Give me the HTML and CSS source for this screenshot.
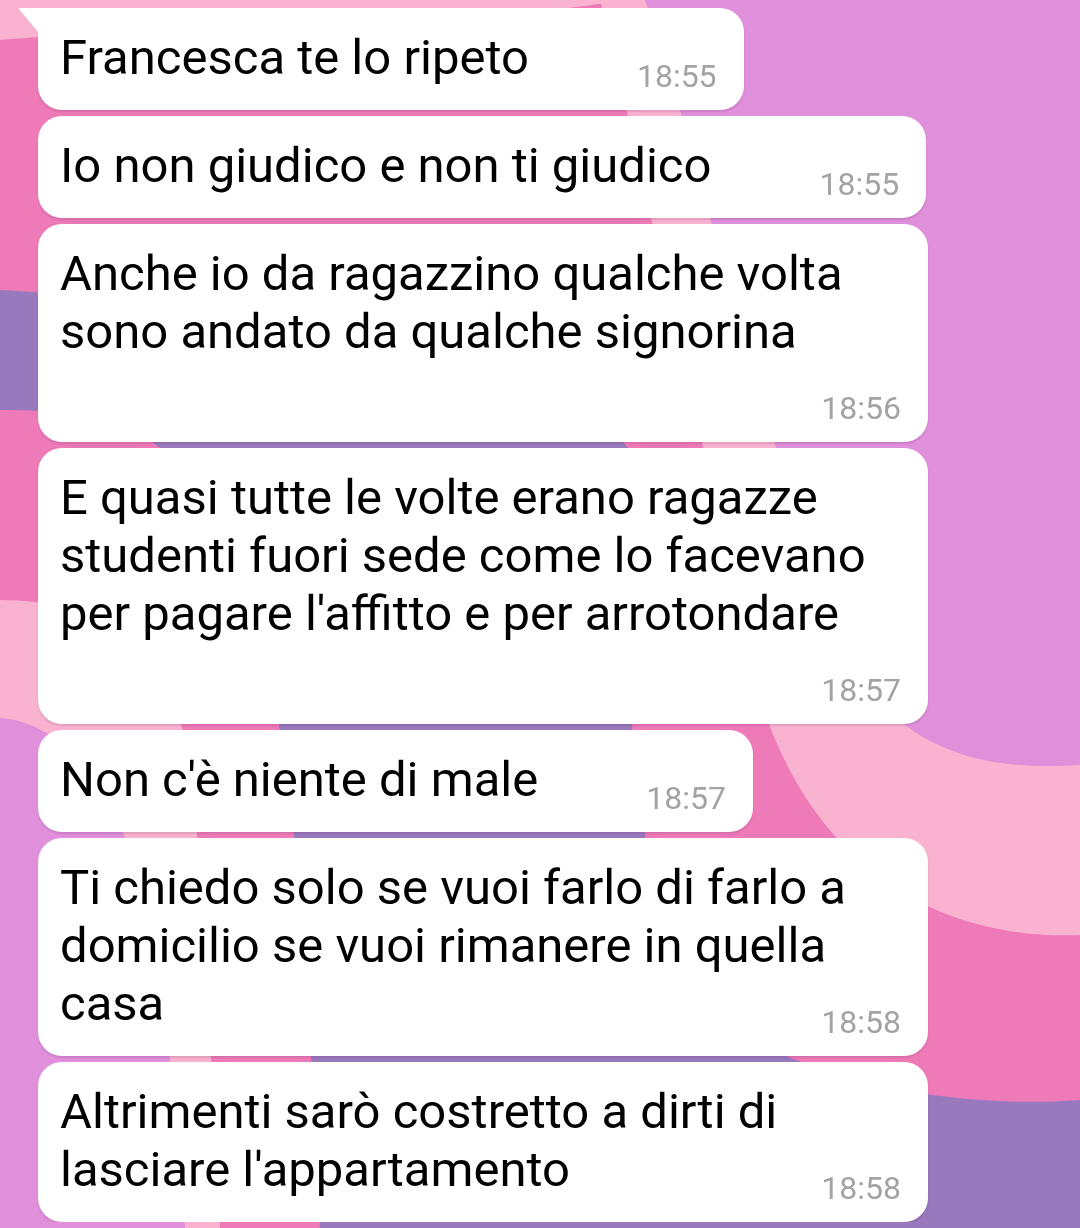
FILE: index.html
```html
<!DOCTYPE html>
<html lang="it">
<head>
    <meta charset="UTF-8">
    <title>Chat</title>
    <link rel="stylesheet" href="styles.css">
</head>
<body>
    <svg class="wallpaper" viewBox="0 0 1080 1228" preserveAspectRatio="none">
        <rect width="1080" height="1228" fill="#ee7ab8"/>
        <path d="M0 290 C200 300 560 360 630 450 C640 600 600 800 700 1000 C780 1080 950 1110 1080 1100 L1080 1228 L0 1228 Z" fill="#9979be"/>
        <path d="M0 410 C80 410 150 420 190 480 C280 600 300 800 320 1228 L0 1228 Z" fill="#ee7ab8"/>
        <path d="M0 600 C100 600 170 650 190 760 C205 900 210 1050 220 1228 L0 1228 Z" fill="#f9b3d1"/>
        <path d="M0 718 C60 722 110 780 140 880 C165 980 175 1100 185 1228 L0 1228 Z" fill="#e08fdb"/>
        <path d="M600 0 C650 200 700 450 770 727 C830 880 950 940 1080 935 L1080 0 Z" fill="#f9b3d1"/>
        <path d="M645 0 C700 150 760 450 860 680 C920 760 1000 770 1080 765 L1080 0 Z" fill="#e08fdb"/>
        <path d="M0 0 L620 0 C500 25 200 22 0 40 Z" fill="#f9b3d1"/>
    </svg>

    <div class="chat">
        <div class="msg first"><span class="text">Francesca te lo ripeto</span><span class="time">18:55</span></div>
        <div class="msg"><span class="text">Io non giudico e non ti giudico</span><span class="time">18:55</span></div>
        <div class="msg"><span class="text">Anche io da ragazzino qualche volta sono andato da qualche signorina</span><span class="time">18:56</span></div>
        <div class="msg"><span class="text">E quasi tutte le volte erano ragazze studenti fuori sede come lo facevano per pagare l'affitto e per arrotondare</span><span class="time">18:57</span></div>
        <div class="msg"><span class="text">Non c'è niente di male</span><span class="time">18:57</span></div>
        <div class="msg"><span class="text">Ti chiedo solo se vuoi farlo di farlo a domicilio se vuoi rimanere in quella casa</span><span class="time">18:58</span></div>
        <div class="msg"><span class="text">Altrimenti sarò costretto a dirti di lasciare l'appartamento</span><span class="time">18:58</span></div>
    </div>
</body>
</html>
```

FILE: styles.css
```css
body {
    margin: 0;
    font-family: Roboto, "Noto Sans", sans-serif;
    background: #e08fdb;
}
.wallpaper {
    position: fixed;
    top: 0;
    left: 0;
    width: 1080px;
    height: 1228px;
    z-index: -1;
}
.chat {
    display: flex;
    flex-direction: column;
    align-items: flex-start;
    gap: 6px;
    padding: 8px 0 0 38px;
}
.msg {
    position: relative;
    display: flow-root;
    width: fit-content;
    max-width: 890px;
    box-sizing: border-box;
    padding: 21px 27px 15px 22px;
    background: #fff;
    border-radius: 24px;
    box-shadow: 0 2px 2px rgba(90, 30, 80, 0.15);
    color: #000;
    font-size: 49px;
    line-height: 58px;
}
.first {
    border-top-left-radius: 0;
}
.first::before {
    content: "";
    position: absolute;
    left: -20px;
    top: 0;
    width: 21px;
    height: 25px;
    background: #fff;
    clip-path: polygon(0 0, 100% 0, 100% 100%);
    border-top-left-radius: 3px;
}
.time {
    float: right;
    margin: 29px 0 0 108px;
    font-size: 32px;
    line-height: 37px;
    color: #a3a3a3;
}
```
